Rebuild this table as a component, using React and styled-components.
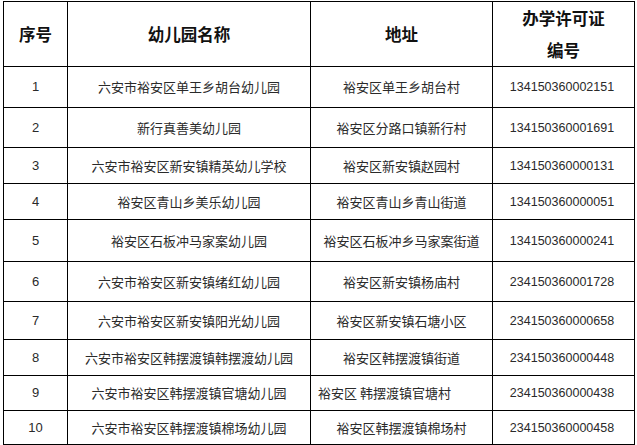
import styled, { createGlobalStyle } from 'styled-components';

const GlobalStyle = createGlobalStyle`
  html, body {
    margin: 0;
    padding: 0;
    background: #fff;
  }
`;

const columns = [64, 243, 182, 142];

const rows = [
  { no: '1', name: '六安市裕安区单王乡胡台幼儿园', address: '裕安区单王乡胡台村', license: '134150360002151', height: 41 },
  { no: '2', name: '新行真善美幼儿园', address: '裕安区分路口镇新行村', license: '134150360001691', height: 40 },
  { no: '3', name: '六安市裕安区新安镇精英幼儿学校', address: '裕安区新安镇赵园村', license: '134150360000131', height: 36 },
  { no: '4', name: '裕安区青山乡美乐幼儿园', address: '裕安区青山乡青山街道', license: '134150360000051', height: 36 },
  { no: '5', name: '裕安区石板冲马家案幼儿园', address: '裕安区石板冲乡马家案街道', license: '134150360000241', height: 42 },
  { no: '6', name: '六安市裕安区新安镇绪红幼儿园', address: '裕安区新安镇杨庙村', license: '234150360001728', height: 40 },
  { no: '7', name: '六安市裕安区新安镇阳光幼儿园', address: '裕安区新安镇石塘小区', license: '234150360000658', height: 38 },
  { no: '8', name: '六安市裕安区韩摆渡镇韩摆渡幼儿园', address: '裕安区韩摆渡镇街道', license: '234150360000448', height: 36 },
  { no: '9', name: '六安市裕安区韩摆渡镇官塘幼儿园', address: '裕安区 韩摆渡镇官塘村', license: '234150360000438', height: 35, alignAddress: 'left' },
  { no: '10', name: '六安市裕安区韩摆渡镇棉场幼儿园', address: '裕安区韩摆渡镇棉场村', license: '234150360000458', height: 34 },
];

export default function App() {
  return (
    <Page>
      <GlobalStyle />
      <Table>
        <colgroup>
          {columns.map((w, i) => (
            <col key={i} style={{ width: w }} />
          ))}
        </colgroup>
        <thead>
          <HeadRow>
            <HeadCell>序号</HeadCell>
            <HeadCell>幼儿园名称</HeadCell>
            <HeadCell>地址</HeadCell>
            <HeadCell>
              <HeadLine>办学许可证</HeadLine>
              <HeadLine>编号</HeadLine>
            </HeadCell>
          </HeadRow>
        </thead>
        <tbody>
          {rows.map((row) => (
            <BodyRow key={row.no} $height={row.height}>
              <NumberCell>{row.no}</NumberCell>
              <TextCell>{row.name}</TextCell>
              <TextCell $align={row.alignAddress}>{row.address}</TextCell>
              <NumberCell $code>{row.license}</NumberCell>
            </BodyRow>
          ))}
        </tbody>
      </Table>
    </Page>
  );
}

const Page = styled.div`
  padding: 1px 0 0 3px;
`;

const Table = styled.table`
  border-collapse: collapse;
  table-layout: fixed;
  width: 632px;
  border: 1px solid #000;
`;

const HeadRow = styled.tr`
  height: 65px;
`;

const HeadCell = styled.th`
  border: 1px solid #000;
  padding: 0;
  text-align: center;
  vertical-align: middle;
  font-family: 'Noto Sans CJK SC', 'Liberation Sans', sans-serif;
  font-size: 16.5px;
  font-weight: 700;
  line-height: 32px;
  color: #111;
`;

const HeadLine = styled.div`
  white-space: nowrap;
`;

const BodyRow = styled.tr`
  height: ${({ $height }) => $height}px;
`;

const TextCell = styled.td`
  border: 1px solid #000;
  padding: ${({ $align }) => ($align === 'left' ? '0 0 0 7px' : '0')};
  text-align: ${({ $align }) => $align || 'center'};
  vertical-align: middle;
  font-family: 'Noto Sans CJK SC', sans-serif;
  font-size: 13px;
  line-height: 16px;
  color: #2a2a2a;
  white-space: pre;
`;

const NumberCell = styled.td`
  border: 1px solid #000;
  padding: 0;
  text-align: center;
  vertical-align: middle;
  font-family: 'Liberation Sans', sans-serif;
  font-size: ${({ $code }) => ($code ? '12.5px' : '13px')};
  line-height: 16px;
  color: #2a2a2a;
  padding-right: ${({ $code }) => ($code ? '3px' : '0')};
`;
